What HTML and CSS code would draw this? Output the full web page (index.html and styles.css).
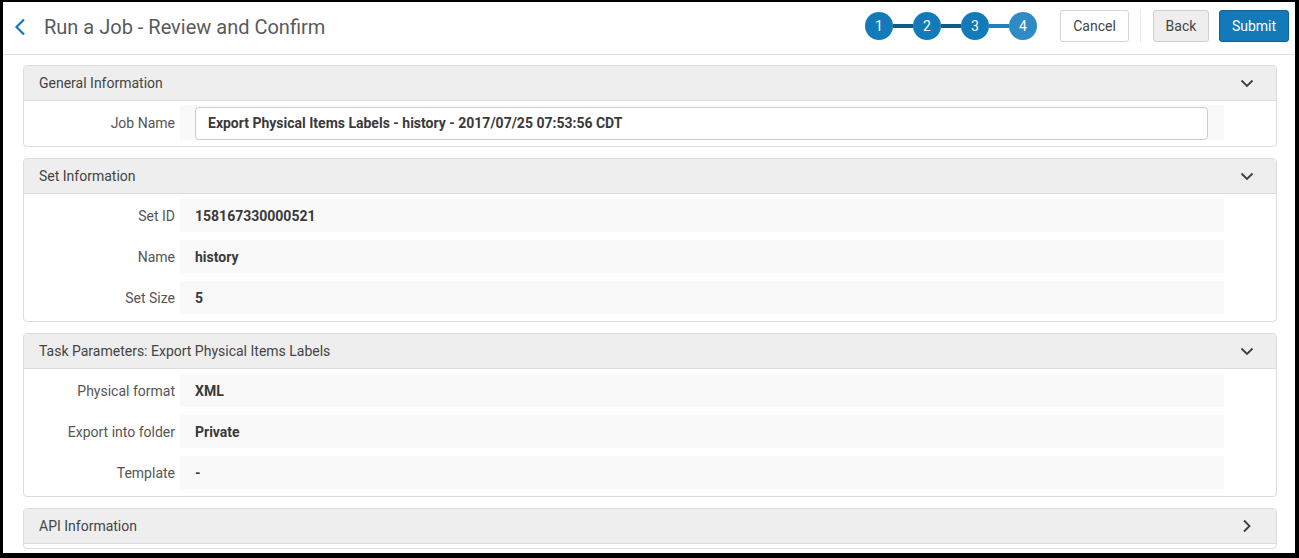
FILE: index.html
```html
<!DOCTYPE html>
<html lang="en">
<head>
<meta charset="utf-8">
<title>Run a Job - Review and Confirm</title>
<link rel="stylesheet" href="styles.css">
</head>
<body>
<div class="frame">
  <header class="topbar">
    <div class="title-wrap">
      <svg class="back-icon" width="14" height="18" viewBox="0 0 14 18"><path d="M11 1.5 L3.5 9 L11 16.5" fill="none" stroke="#1a74c2" stroke-width="2.2"/></svg>
      <h1 class="title">Run a Job - Review and Confirm</h1>
    </div>
    <div class="actions">
      <div class="steps">
        <span class="step">1</span><span class="conn dark"></span>
        <span class="step">2</span><span class="conn dark"></span>
        <span class="step">3</span><span class="conn light"></span>
        <span class="step current">4</span>
      </div>
      <button class="btn btn-cancel">Cancel</button>
      <span class="sep"></span>
      <button class="btn btn-back">Back</button>
      <button class="btn btn-submit">Submit</button>
    </div>
  </header>

  <main class="content">
    <section class="panel">
      <div class="panel-head">
        <span class="panel-title">General Information</span>
        <svg class="chev" width="14" height="9" viewBox="0 0 14 9"><path d="M1.5 1.5 L7 7 L12.5 1.5" fill="none" stroke="#3a3f46" stroke-width="1.8"/></svg>
      </div>
      <div class="panel-body">
        <div class="row">
          <div class="label">Job Name</div>
          <div class="value input-cell"><div class="input">Export Physical Items Labels - history - 2017/07/25 07:53:56 CDT</div></div>
        </div>
      </div>
    </section>

    <section class="panel">
      <div class="panel-head">
        <span class="panel-title">Set Information</span>
        <svg class="chev" width="14" height="9" viewBox="0 0 14 9"><path d="M1.5 1.5 L7 7 L12.5 1.5" fill="none" stroke="#3a3f46" stroke-width="1.8"/></svg>
      </div>
      <div class="panel-body">
        <div class="row"><div class="label">Set ID</div><div class="value">158167330000521</div></div>
        <div class="row"><div class="label">Name</div><div class="value">history</div></div>
        <div class="row"><div class="label">Set Size</div><div class="value">5</div></div>
      </div>
    </section>

    <section class="panel">
      <div class="panel-head">
        <span class="panel-title">Task Parameters: Export Physical Items Labels</span>
        <svg class="chev" width="14" height="9" viewBox="0 0 14 9"><path d="M1.5 1.5 L7 7 L12.5 1.5" fill="none" stroke="#3a3f46" stroke-width="1.8"/></svg>
      </div>
      <div class="panel-body">
        <div class="row"><div class="label">Physical format</div><div class="value">XML</div></div>
        <div class="row"><div class="label">Export into folder</div><div class="value">Private</div></div>
        <div class="row"><div class="label">Template</div><div class="value">-</div></div>
      </div>
    </section>

    <section class="panel">
      <div class="panel-head">
        <span class="panel-title">API Information</span>
        <svg class="chev" width="14" height="14" viewBox="0 0 14 14"><path d="M4 1.5 L9.5 7 L4 12.5" fill="none" stroke="#3a3f46" stroke-width="1.8"/></svg>
      </div>
      <div class="panel-body collapsed"></div>
    </section>
  </main>
</div>
</body>
</html>
```

FILE: styles.css
```css
* { box-sizing: border-box; }

html, body {
  margin: 0;
  padding: 0;
  background: #000;
}

body {
  font-family: Roboto, "Liberation Sans", Arial, sans-serif;
  font-size: 14px;
  color: #333;
}

.frame {
  margin: 2px 0 0 3px;
  width: 1292px;
  height: 551px;
  background: #fff;
  overflow: hidden;
}

.topbar {
  height: 53px;
  border-bottom: 1px solid #e0e0e0;
  display: flex;
  align-items: center;
  justify-content: space-between;
  padding: 0 6px 0 10px;
}

.title-wrap {
  display: flex;
  align-items: center;
  gap: 17px;
  margin-top: -3px;
}

.back-icon { display: block; }

.title {
  margin: 0;
  font-size: 20px;
  font-weight: 400;
  color: #5a5a5a;
}

.actions {
  display: flex;
  align-items: center;
  margin-top: -5px;
}

.steps {
  display: flex;
  align-items: center;
  margin-right: 23px;
}

.step {
  width: 28px;
  height: 28px;
  border-radius: 50%;
  background: #127ab9;
  color: #fff;
  font-size: 14px;
  display: flex;
  align-items: center;
  justify-content: center;
}

.step.current { background: #2e8bc4; }

.conn {
  width: 20px;
  height: 4px;
}
.conn.dark { background: #0e5b8a; }
.conn.light { background: #1c80c1; }

.btn {
  font-family: inherit;
  font-size: 14px;
  height: 32px;
  border-radius: 3px;
  padding: 0;
  cursor: pointer;
}

.btn-cancel {
  width: 69px;
  background: #fff;
  border: 1px solid #d4d4d4;
  color: #444;
}

.sep {
  width: 1px;
  height: 34px;
  background: #e8e8e8;
  margin: 0 12px 0 11px;
}

.btn-back {
  width: 56px;
  background: #eeeeee;
  border: 1px solid #cfcfcf;
  color: #444;
}

.btn-submit {
  width: 70px;
  margin-left: 10px;
  background: #1379b8;
  border: 1px solid #0f6196;
  color: #fff;
}

.content {
  padding: 10px 18px 0 20px;
  display: flex;
  flex-direction: column;
  gap: 11px;
}

.panel {
  border: 1px solid #dcdcdc;
  border-radius: 4px;
  background: #fff;
  overflow: hidden;
}

.panel-head {
  height: 35px;
  background: #eeeeee;
  border-bottom: 1px solid #dcdcdc;
  display: flex;
  align-items: center;
  justify-content: space-between;
  padding: 0 22px 0 15px;
}

.panel-title {
  font-size: 14px;
  color: #444;
}

.chev { display: block; }

.panel-body {
  padding: 5px 52px 7px 0;
  display: flex;
  flex-direction: column;
  gap: 8px;
}

.panel-body.collapsed {
  padding: 0;
  height: 4px;
}

.row {
  display: flex;
  align-items: stretch;
  height: 33px;
}

.label {
  width: 156px;
  flex: none;
  padding-right: 5px;
  text-align: right;
  color: #555;
  display: flex;
  align-items: center;
  justify-content: flex-end;
}

.value {
  flex: 1;
  background: #f9f9f9;
  padding-left: 15px;
  font-weight: 700;
  color: #3a3a3a;
  display: flex;
  align-items: center;
}

.value.input-cell {
  padding: 1px 16px 0 15px;
}

.input-cell { height: 35px; margin-top: -1px; }

.input {
  width: 100%;
  height: 33px;
  border: 1px solid #cccccc;
  border-radius: 4px;
  background: #fff;
  padding-left: 12px;
  display: flex;
  align-items: center;
  font-weight: 700;
  color: #3a3a3a;
}
```
